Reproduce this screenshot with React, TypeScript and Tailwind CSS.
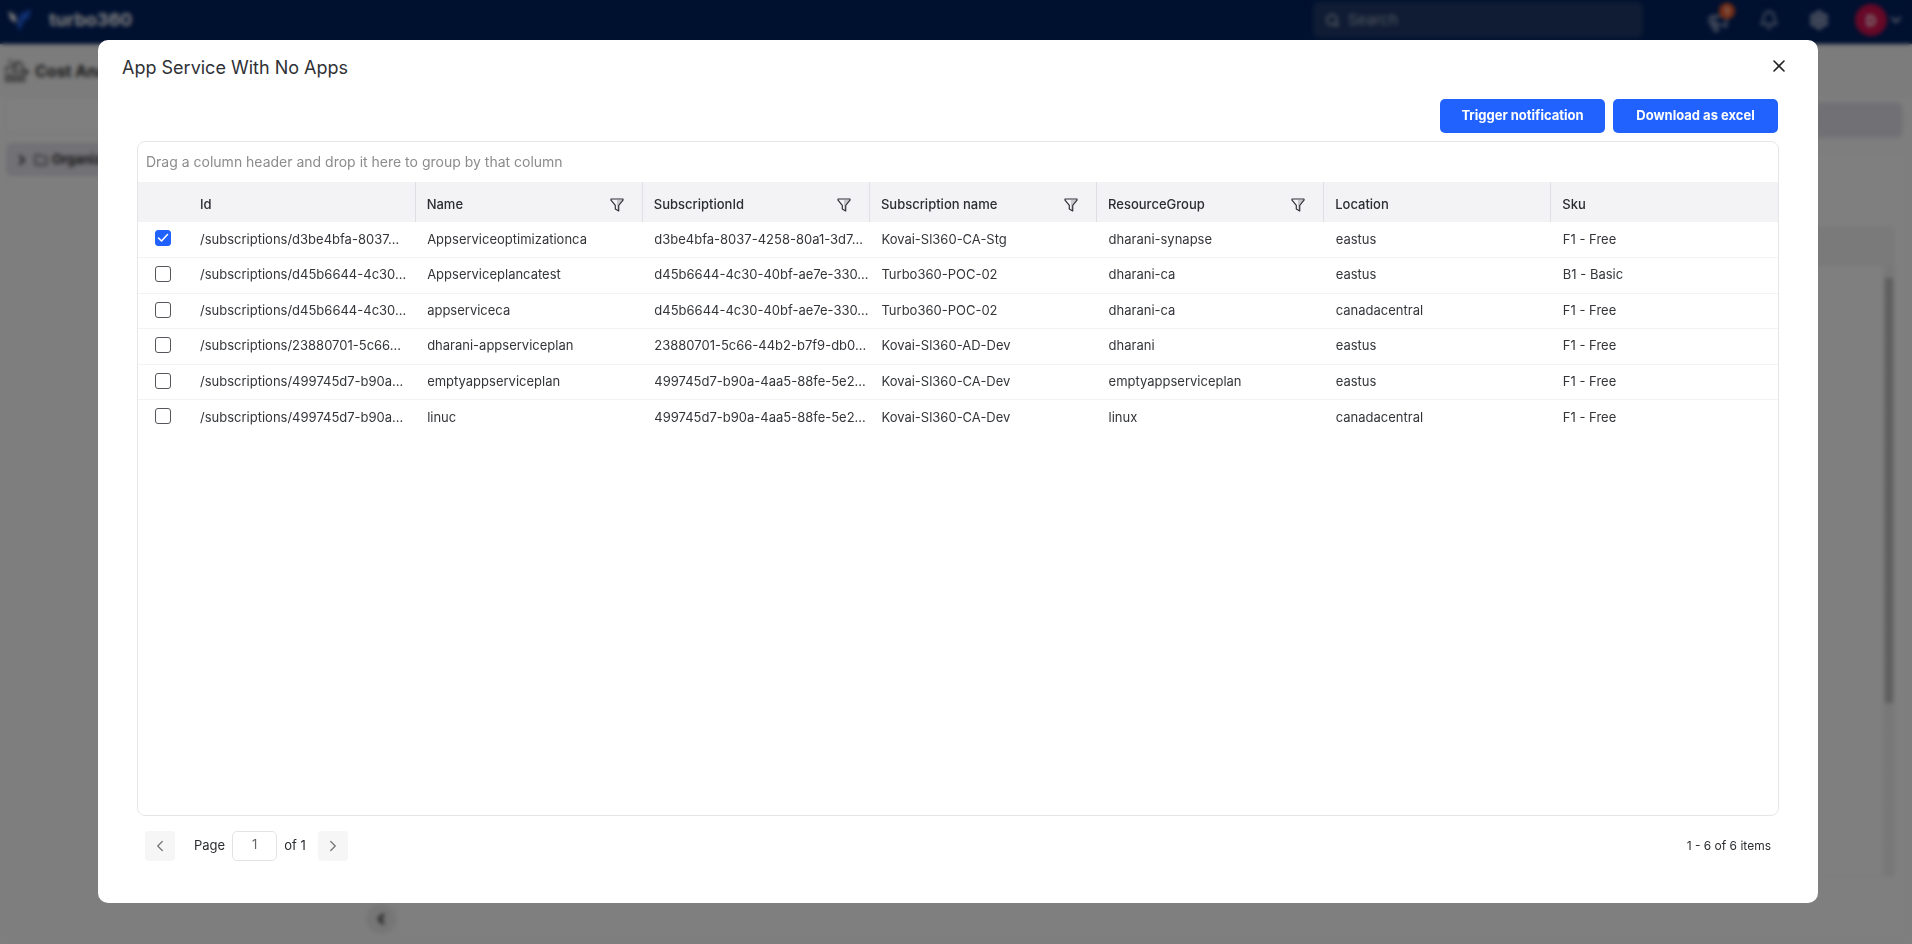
import { useState } from "react";
import { ChevronDown, ChevronLeft, ChevronRight, Folder, Megaphone, Search, Settings, Bell } from "lucide-react";

type Row = {
  id: string;
  name: string;
  subscriptionId: string;
  subscriptionName: string;
  resourceGroup: string;
  location: string;
  sku: string;
};

const columns: { key: keyof Row; label: string; filter: boolean }[] = [
  { key: "id", label: "Id", filter: false },
  { key: "name", label: "Name", filter: true },
  { key: "subscriptionId", label: "SubscriptionId", filter: true },
  { key: "subscriptionName", label: "Subscription name", filter: true },
  { key: "resourceGroup", label: "ResourceGroup", filter: true },
  { key: "location", label: "Location", filter: false },
  { key: "sku", label: "Sku", filter: false },
];

const rows: Row[] = [
  { id: "/subscriptions/d3be4bfa-8037…", name: "Appserviceoptimizationca", subscriptionId: "d3be4bfa-8037-4258-80a1-3d7…", subscriptionName: "Kovai-Sl360-CA-Stg", resourceGroup: "dharani-synapse", location: "eastus", sku: "F1 - Free" },
  { id: "/subscriptions/d45b6644-4c30…", name: "Appserviceplancatest", subscriptionId: "d45b6644-4c30-40bf-ae7e-330…", subscriptionName: "Turbo360-POC-02", resourceGroup: "dharani-ca", location: "eastus", sku: "B1 - Basic" },
  { id: "/subscriptions/d45b6644-4c30…", name: "appserviceca", subscriptionId: "d45b6644-4c30-40bf-ae7e-330…", subscriptionName: "Turbo360-POC-02", resourceGroup: "dharani-ca", location: "canadacentral", sku: "F1 - Free" },
  { id: "/subscriptions/23880701-5c66…", name: "dharani-appserviceplan", subscriptionId: "23880701-5c66-44b2-b7f9-db0…", subscriptionName: "Kovai-Sl360-AD-Dev", resourceGroup: "dharani", location: "eastus", sku: "F1 - Free" },
  { id: "/subscriptions/499745d7-b90a…", name: "emptyappserviceplan", subscriptionId: "499745d7-b90a-4aa5-88fe-5e2…", subscriptionName: "Kovai-Sl360-CA-Dev", resourceGroup: "emptyappserviceplan", location: "eastus", sku: "F1 - Free" },
  { id: "/subscriptions/499745d7-b90a…", name: "linuc", subscriptionId: "499745d7-b90a-4aa5-88fe-5e2…", subscriptionName: "Kovai-Sl360-CA-Dev", resourceGroup: "linux", location: "canadacentral", sku: "F1 - Free" },
];

function FilterIcon() {
  return (
    <svg width="14" height="14" viewBox="0 0 14 14" fill="none" aria-hidden="true">
      <path d="M8 7.2 12 2.6V2H7v9.5l1.2.8z" fill="#c9c9cd" />
      <path
        d="M1 1h12v1.2L8.7 7.3v5.6L5.3 11V7.3L1 2.2z"
        stroke="#2f3136"
        strokeWidth="1.2"
        strokeLinejoin="round"
      />
    </svg>
  );
}

function Logo() {
  return (
    <svg width="24" height="22" viewBox="0 0 24 22" aria-hidden="true">
      <path d="M0 2l7 4 2 8-6-3z" fill="#fff" />
      <path d="M23 0l-2 9-5 3-4 10-3-5 3-12z" fill="#1f5fe0" />
    </svg>
  );
}

function CostIcon() {
  return (
    <svg width="24" height="22" viewBox="0 0 24 22" fill="none" stroke="#444" strokeWidth="1.6" aria-hidden="true">
      <path d="M1 21v-6h4v6zM8 21v-5h4v5zM15 21v-5h4v5z" />
      <path d="M1 12V8l5-2M8 9a5 5 0 1 1 8 2M3 1h4M11 4v6M14 12l8 0M20 9l3 3-3 3" />
      <path d="M6 12l4-1 3 2" />
    </svg>
  );
}

function TopBar() {
  return (
    <header className="flex h-11 shrink-0 items-center bg-[#00205f] pr-2 pb-1 pl-2 text-white">
      <Logo />
      <span className="ml-[17px] flex-1 text-[18px] leading-6 font-bold">turbo360</span>
      <div className="flex h-9 w-[330px] items-center gap-2 rounded-md bg-[#1f3868] pl-3 text-white/70">
        <Search size={15} strokeWidth={2.5} />
        <input
          aria-label="Search"
          placeholder="Search"
          className="min-w-0 flex-1 bg-transparent text-[15px] placeholder:text-white/60 focus:outline-none"
        />
      </div>
      <div className="ml-16 flex items-center gap-[30px] text-[#b8c2d8]">
        <button type="button" aria-label="Announcements" className="relative">
          <Megaphone size={22} className="translate-y-0.5" />
          <span className="absolute -top-1.5 -right-1.5 flex size-4 items-center justify-center rounded-full bg-[#f05a28] text-[10px] font-bold text-white">
            1
          </span>
        </button>
        <button type="button" aria-label="Alerts">
          <Bell size={20} />
        </button>
        <button type="button" aria-label="Settings" className="-mr-1">
          <Settings size={20} strokeWidth={3} />
        </button>
        <button type="button" aria-label="Account" className="flex items-center gap-px">
          <span className="flex size-8 items-center justify-center rounded-full bg-[#d0114f] text-[14px] font-bold text-white">
            D
          </span>
          <ChevronDown size={16} strokeWidth={3} />
        </button>
      </div>
    </header>
  );
}

function Workspace() {
  return (
    <div className="flex min-h-0 flex-1 flex-col bg-[#fdfdfd] text-[#333]">
      <div className="flex h-[53px] shrink-0 items-center gap-1.5 bg-[#f8f8f8] pl-[5px]">
        <CostIcon />
        <span className="text-[16px] leading-6 font-bold">Cost Analysis</span>
      </div>
      <div className="flex min-h-0 flex-1 pr-1">
        <aside className="flex w-[396px] shrink-0 flex-col pl-1.5">
          <div className="h-9 rounded-md border border-[#f0f0f0] bg-white" />
          <div className="mt-2.5 flex h-[33px] items-center gap-1 rounded-md bg-[#e3e2ec] pl-2">
            <ChevronRight size={16} strokeWidth={3} />
            <Folder size={14} />
            <span className="text-[13px] font-bold">Organization</span>
          </div>
          <button
            type="button"
            aria-label="Collapse panel"
            className="mt-auto mb-2.5 flex size-[30px] items-center justify-center self-end rounded-full bg-[#ececec]"
          >
            <ChevronLeft size={16} strokeWidth={4} />
          </button>
        </aside>
        <section className="flex min-w-0 flex-1 flex-col">
          <div className="h-[46px] shrink-0 rounded-md border border-[#f3f3f3] bg-white p-1">
            <div className="h-full rounded-md bg-[#e3e2ea]" />
          </div>
          <div className="mt-2.5 mb-1.5 flex min-h-0 flex-1 flex-col rounded-md border border-[#f3f3f3] bg-white pt-[72px] pr-3 pb-[60px]">
            <div className="h-10 shrink-0 rounded-t-md bg-[#f4f4f4]" />
            <div className="flex min-h-0 flex-1 border-b border-[#f3f3f3]">
              <div className="flex flex-1 flex-col divide-y divide-[#f6f6f6] overflow-hidden">
                {Array.from({ length: 17 }, (_, i) => (
                  <div key={i} className="h-9 shrink-0" />
                ))}
              </div>
              <div className="w-3 bg-[#f0f0f0] px-0.5 pt-3">
                <div className="h-[71%] bg-[#bdbdbd]" />
              </div>
            </div>
          </div>
        </section>
      </div>
    </div>
  );
}

function Grid() {
  const [selected, setSelected] = useState<boolean[]>([true, false, false, false, false, false]);
  const toggle = (index: number) => setSelected((s) => s.map((v, i) => (i === index ? !v : v)));

  return (
    <div className="flex-1 overflow-hidden rounded-lg border border-[#e6e6e9]">
      <p className="flex h-10 items-center px-2 pb-0.5 text-[14px] text-[#8c8c8c]">
        Drag a column header and drop it here to group by that column
      </p>
      <table className="w-full table-fixed text-left text-[13px]">
        <thead className="bg-[#f3f3f6] text-[#2b2d31]">
          <tr className="h-10">
            <th className="w-[50px]" aria-label="Selected" />
            {columns.map((c, i) => (
              <th
                key={c.key}
                className={
                  i === 0
                    ? "px-3 pt-1.5 font-medium"
                    : "border-l border-[#dfe0e5] pt-1.5 pr-[18px] pl-[11px] font-medium"
                }
              >
                <div className="flex items-center justify-between">
                  {c.label}
                  {c.filter && (
                    <button type="button" aria-label={"Filter " + c.label}>
                      <FilterIcon />
                    </button>
                  )}
                </div>
              </th>
            ))}
          </tr>
        </thead>
        <tbody className="divide-y divide-[#f3f3f4] text-[#333539]">
          {rows.map((row, i) => (
            <tr key={i} className="h-[35px] even:h-[36px]">
              <td className="pb-0.5 pl-[17px]">
                <label className="grid size-4">
                  <input
                    type="checkbox"
                    aria-label={"Select " + row.name}
                    checked={selected[i]}
                    onChange={() => toggle(i)}
                    className="peer col-start-1 row-start-1 size-4 appearance-none rounded-[3px] border border-[#55575c] bg-white checked:border-[#2162ff] checked:bg-[#2162ff]"
                  />
                  <svg
                    viewBox="0 0 16 16"
                    className="pointer-events-none invisible col-start-1 row-start-1 size-4 peer-checked:visible"
                    fill="none"
                    stroke="#fff"
                    strokeWidth="1.6"
                    strokeLinecap="round"
                    strokeLinejoin="round"
                    aria-hidden="true"
                  >
                    <path d="M3.5 8l3 3 6-6.5" />
                  </svg>
                </label>
              </td>
              {columns.map((c) => (
                <td key={c.key} className="pl-3 whitespace-nowrap">
                  {row[c.key]}
                </td>
              ))}
            </tr>
          ))}
        </tbody>
      </table>
    </div>
  );
}

function Pager() {
  const [page, setPage] = useState("1");
  return (
    <nav aria-label="Pagination" className="mt-[15px] flex items-center px-2 text-[13px] text-[#2b2d31]">
      <button
        type="button"
        aria-label="Previous page"
        className="flex size-[30px] items-center justify-center rounded-sm bg-[#f6f6f6] text-[#777]"
      >
        <ChevronLeft size={18} strokeWidth={1.75} />
      </button>
      <label htmlFor="page" className="ml-[19px]">
        Page
      </label>
      <input
        id="page"
        value={page}
        onChange={(e) => setPage(e.target.value)}
        className="mx-[7px] h-[30px] w-[45px] rounded-[5px] border border-[#e3e3e6] pb-1 text-center text-[#666]"
      />
      <span>of 1</span>
      <button
        type="button"
        aria-label="Next page"
        className="ml-3 flex size-[30px] items-center justify-center rounded-sm bg-[#f6f6f6] text-[#777]"
      >
        <ChevronRight size={18} strokeWidth={1.75} />
      </button>
      <span className="ml-auto text-[12px]">1 - 6 of 6 items</span>
    </nav>
  );
}

export default function App() {
  return (
    <div className="flex h-screen flex-col overflow-hidden font-['Inter',sans-serif]">
      <TopBar />
      <Workspace />
      <div className="fixed inset-0 flex bg-black/50 pt-10 pr-[94px] pb-[41px] pl-[98px] backdrop-blur-[2px]">
        <div
          role="dialog"
          aria-modal="true"
          aria-labelledby="dialog-title"
          className="flex min-w-0 flex-1 flex-col rounded-[10px] bg-white"
        >
          <div className="flex items-start justify-between pt-4 pr-[29px] pl-6">
            <h1 id="dialog-title" className="text-[18px] leading-6 text-[#2f3136]">
              App Service With No Apps
            </h1>
            <button type="button" aria-label="Close" className="flex size-5 items-center justify-center">
              <svg width="12" height="12" viewBox="0 0 12 12" stroke="#222" strokeWidth="1.6" strokeLinecap="round" aria-hidden="true">
                <path d="M1 1l10 10M11 1L1 11" />
              </svg>
            </button>
          </div>
          <div className="flex min-h-0 flex-1 flex-col px-[39px] pt-[19px] pb-[42px]">
            <div className="mb-2 flex justify-end gap-2 pr-px">
              <button type="button" className="h-[34px] w-[165px] rounded-[5px] bg-[#2162ff] text-[13px] font-bold text-white">
                Trigger notification
              </button>
              <button type="button" className="h-[34px] w-[165px] rounded-[5px] bg-[#2162ff] text-[13px] font-bold text-white">
                Download as excel
              </button>
            </div>
            <Grid />
            <Pager />
          </div>
        </div>
      </div>
    </div>
  );
}
